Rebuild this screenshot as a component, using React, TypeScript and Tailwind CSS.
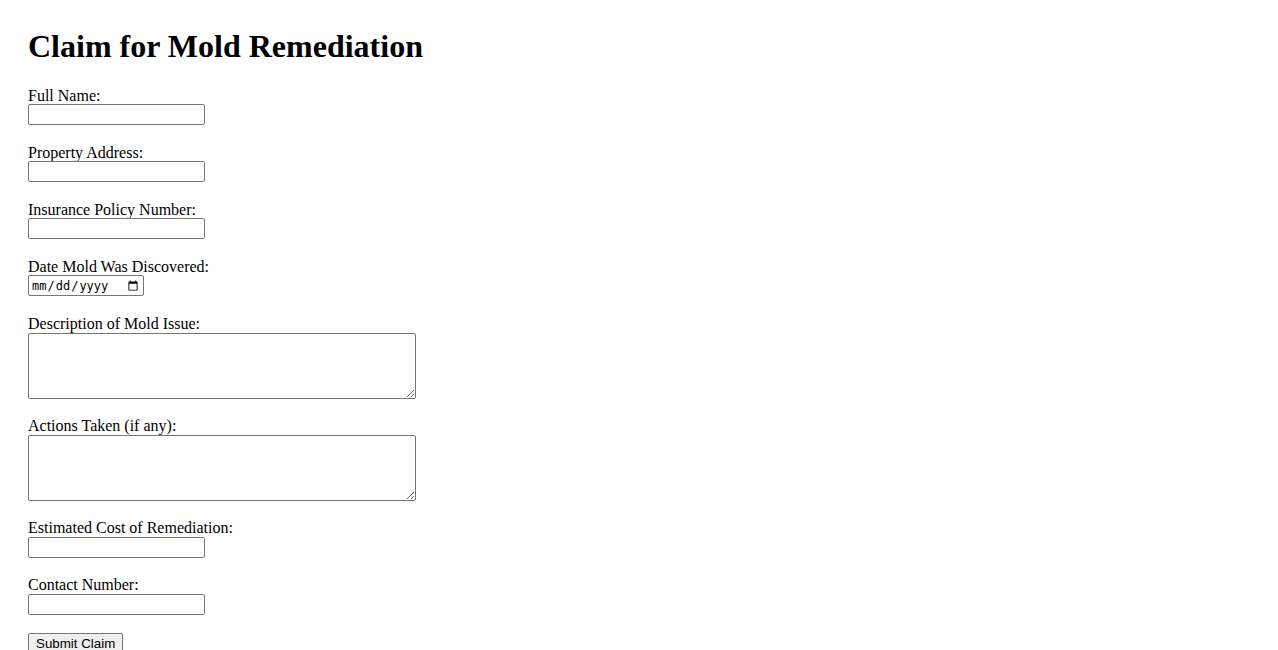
import React from "react";

const serif = { fontFamily: '"Liberation Serif", "Times New Roman", serif' };

function Field({
  label,
  children,
  tight,
}: {
  label: string;
  children: React.ReactNode;
  tight?: boolean;
}) {
  return (
    <div className={tight ? "flex flex-col items-start mb-[18px]" : "flex flex-col items-start mb-[19px]"}>
      <label className="block text-[16px] leading-[17px] text-black">{label}</label>
      {children}
    </div>
  );
}

const inputCls =
  "block w-[177px] h-[21px] border border-[#767676] rounded-[2px] bg-white px-[2px] text-[13.33px] outline-none";
const inputCls2 =
  "block mt-[1px] w-[177px] h-[21px] border border-[#767676] rounded-[2px] bg-white px-[2px] text-[13.33px] outline-none";
const areaCls =
  "block mt-[1px] w-[388px] h-[66px] border border-[#767676] rounded-[2px] bg-white p-[2px] text-[13.33px] outline-none resize";

export default function App() {
  return (
    <div className="min-h-[650px] bg-white px-[28px] pt-[28px] text-black" style={serif}>
      <h1 className="text-[32px] leading-[37px] font-bold mb-[22px]">Claim for Mold Remediation</h1>
      <form onSubmit={(e) => e.preventDefault()}>
        <Field label="Full Name:">
          <input type="text" className={inputCls} />
        </Field>
        <Field label="Property Address:">
          <input type="text" className={inputCls} />
        </Field>
        <Field label="Insurance Policy Number:">
          <input type="text" className={inputCls} />
        </Field>
        <Field label="Date Mold Was Discovered:">
          <input
            type="date"
            className="block w-[116px] h-[21px] border border-[#767676] rounded-[2px] bg-white px-[2px] text-[13px] outline-none"
            style={{ fontFamily: '"DejaVu Sans Mono", "Liberation Mono", monospace', fontSize: "12px" }}
          />
        </Field>
        <Field label="Description of Mold Issue:" tight>
          <textarea className={areaCls} />
        </Field>
        <Field label="Actions Taken (if any):" tight>
          <textarea className={areaCls} />
        </Field>
        <Field label="Estimated Cost of Remediation:" tight>
          <input type="text" className={inputCls2} />
        </Field>
        <Field label="Contact Number:" tight>
          <input type="text" className={inputCls2} />
        </Field>
        <div className="-mt-[2px]">
          <button
            type="submit"
            className="h-[21px] px-[7px] border border-[#767676] rounded-[2px] bg-[#efefef] text-[13.33px] leading-[19px] text-black"
            style={{ fontFamily: '"Liberation Sans", Arial, sans-serif' }}
          >
            Submit Claim
          </button>
        </div>
      </form>
    </div>
  );
}
